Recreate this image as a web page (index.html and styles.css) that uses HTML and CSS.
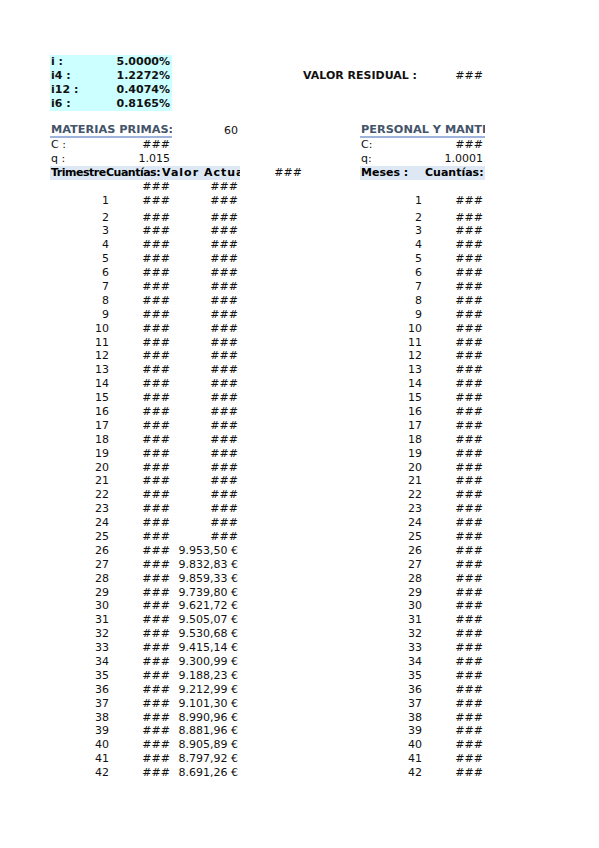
FILE: index.html
```html
<!DOCTYPE html>
<html lang="es">
<head>
<meta charset="utf-8">
<title>Materias primas</title>
<link rel="stylesheet" href="styles.css">
</head>
<body>
<div class="sheet">
  <div class="row"><span class="c rate lab">i :</span><span class="c rate val">5.0000%</span></div>
  <div class="row"><span class="c rate lab">i4 :</span><span class="c rate val">1.2272%</span><span></span><span></span><span class="c b">VALOR RESIDUAL :</span><span></span><span class="c r">###</span></div>
  <div class="row"><span class="c rate lab">i12 :</span><span class="c rate val">0.4074%</span></div>
  <div class="row"><span class="c rate lab">i6 :</span><span class="c rate val">0.8165%</span></div>
  <div class="row"></div>
  <div class="row"><span class="c title span2">MATERIAS PRIMAS:</span><span class="c r">60</span><span></span><span></span><span class="c title span2">PERSONAL Y MANTENIMIENTO</span></div>
  <div class="row"><span class="c">C :</span><span class="c r">###</span><span></span><span></span><span></span><span class="c">C:</span><span class="c r">###</span></div>
  <div class="row"><span class="c">q :</span><span class="c r">1.015</span><span></span><span></span><span></span><span class="c">q:</span><span class="c r">1.0001</span></div>
  <div class="row"><span class="c hd hl">Trimestre</span><span class="c hd hl h2">Cuantías:</span><span class="c hd h3">Valor Actual:</span><span class="c r edge">###</span><span></span><span class="c hd">Meses :</span><span class="c hd r">Cuantías:</span></div>
  <div class="row"><span></span><span class="c r">###</span><span class="c r">###</span></div>
  <div class="row tall"><span class="c n">1</span><span class="c r">###</span><span class="c r">###</span><span></span><span></span><span class="c n">1</span><span class="c r">###</span></div>
  <div class="row"><span class="c n">2</span><span class="c r">###</span><span class="c r">###</span><span></span><span></span><span class="c n">2</span><span class="c r">###</span></div>
  <div class="row"><span class="c n">3</span><span class="c r">###</span><span class="c r">###</span><span></span><span></span><span class="c n">3</span><span class="c r">###</span></div>
  <div class="row"><span class="c n">4</span><span class="c r">###</span><span class="c r">###</span><span></span><span></span><span class="c n">4</span><span class="c r">###</span></div>
  <div class="row"><span class="c n">5</span><span class="c r">###</span><span class="c r">###</span><span></span><span></span><span class="c n">5</span><span class="c r">###</span></div>
  <div class="row"><span class="c n">6</span><span class="c r">###</span><span class="c r">###</span><span></span><span></span><span class="c n">6</span><span class="c r">###</span></div>
  <div class="row"><span class="c n">7</span><span class="c r">###</span><span class="c r">###</span><span></span><span></span><span class="c n">7</span><span class="c r">###</span></div>
  <div class="row"><span class="c n">8</span><span class="c r">###</span><span class="c r">###</span><span></span><span></span><span class="c n">8</span><span class="c r">###</span></div>
  <div class="row"><span class="c n">9</span><span class="c r">###</span><span class="c r">###</span><span></span><span></span><span class="c n">9</span><span class="c r">###</span></div>
  <div class="row"><span class="c n">10</span><span class="c r">###</span><span class="c r">###</span><span></span><span></span><span class="c n">10</span><span class="c r">###</span></div>
  <div class="row"><span class="c n">11</span><span class="c r">###</span><span class="c r">###</span><span></span><span></span><span class="c n">11</span><span class="c r">###</span></div>
  <div class="row"><span class="c n">12</span><span class="c r">###</span><span class="c r">###</span><span></span><span></span><span class="c n">12</span><span class="c r">###</span></div>
  <div class="row"><span class="c n">13</span><span class="c r">###</span><span class="c r">###</span><span></span><span></span><span class="c n">13</span><span class="c r">###</span></div>
  <div class="row"><span class="c n">14</span><span class="c r">###</span><span class="c r">###</span><span></span><span></span><span class="c n">14</span><span class="c r">###</span></div>
  <div class="row"><span class="c n">15</span><span class="c r">###</span><span class="c r">###</span><span></span><span></span><span class="c n">15</span><span class="c r">###</span></div>
  <div class="row"><span class="c n">16</span><span class="c r">###</span><span class="c r">###</span><span></span><span></span><span class="c n">16</span><span class="c r">###</span></div>
  <div class="row"><span class="c n">17</span><span class="c r">###</span><span class="c r">###</span><span></span><span></span><span class="c n">17</span><span class="c r">###</span></div>
  <div class="row"><span class="c n">18</span><span class="c r">###</span><span class="c r">###</span><span></span><span></span><span class="c n">18</span><span class="c r">###</span></div>
  <div class="row"><span class="c n">19</span><span class="c r">###</span><span class="c r">###</span><span></span><span></span><span class="c n">19</span><span class="c r">###</span></div>
  <div class="row"><span class="c n">20</span><span class="c r">###</span><span class="c r">###</span><span></span><span></span><span class="c n">20</span><span class="c r">###</span></div>
  <div class="row"><span class="c n">21</span><span class="c r">###</span><span class="c r">###</span><span></span><span></span><span class="c n">21</span><span class="c r">###</span></div>
  <div class="row"><span class="c n">22</span><span class="c r">###</span><span class="c r">###</span><span></span><span></span><span class="c n">22</span><span class="c r">###</span></div>
  <div class="row"><span class="c n">23</span><span class="c r">###</span><span class="c r">###</span><span></span><span></span><span class="c n">23</span><span class="c r">###</span></div>
  <div class="row"><span class="c n">24</span><span class="c r">###</span><span class="c r">###</span><span></span><span></span><span class="c n">24</span><span class="c r">###</span></div>
  <div class="row"><span class="c n">25</span><span class="c r">###</span><span class="c r">###</span><span></span><span></span><span class="c n">25</span><span class="c r">###</span></div>
  <div class="row"><span class="c n">26</span><span class="c r">###</span><span class="c r">9.953,50 €</span><span></span><span></span><span class="c n">26</span><span class="c r">###</span></div>
  <div class="row"><span class="c n">27</span><span class="c r">###</span><span class="c r">9.832,83 €</span><span></span><span></span><span class="c n">27</span><span class="c r">###</span></div>
  <div class="row"><span class="c n">28</span><span class="c r">###</span><span class="c r">9.859,33 €</span><span></span><span></span><span class="c n">28</span><span class="c r">###</span></div>
  <div class="row"><span class="c n">29</span><span class="c r">###</span><span class="c r">9.739,80 €</span><span></span><span></span><span class="c n">29</span><span class="c r">###</span></div>
  <div class="row"><span class="c n">30</span><span class="c r">###</span><span class="c r">9.621,72 €</span><span></span><span></span><span class="c n">30</span><span class="c r">###</span></div>
  <div class="row"><span class="c n">31</span><span class="c r">###</span><span class="c r">9.505,07 €</span><span></span><span></span><span class="c n">31</span><span class="c r">###</span></div>
  <div class="row"><span class="c n">32</span><span class="c r">###</span><span class="c r">9.530,68 €</span><span></span><span></span><span class="c n">32</span><span class="c r">###</span></div>
  <div class="row"><span class="c n">33</span><span class="c r">###</span><span class="c r">9.415,14 €</span><span></span><span></span><span class="c n">33</span><span class="c r">###</span></div>
  <div class="row"><span class="c n">34</span><span class="c r">###</span><span class="c r">9.300,99 €</span><span></span><span></span><span class="c n">34</span><span class="c r">###</span></div>
  <div class="row"><span class="c n">35</span><span class="c r">###</span><span class="c r">9.188,23 €</span><span></span><span></span><span class="c n">35</span><span class="c r">###</span></div>
  <div class="row"><span class="c n">36</span><span class="c r">###</span><span class="c r">9.212,99 €</span><span></span><span></span><span class="c n">36</span><span class="c r">###</span></div>
  <div class="row"><span class="c n">37</span><span class="c r">###</span><span class="c r">9.101,30 €</span><span></span><span></span><span class="c n">37</span><span class="c r">###</span></div>
  <div class="row"><span class="c n">38</span><span class="c r">###</span><span class="c r">8.990,96 €</span><span></span><span></span><span class="c n">38</span><span class="c r">###</span></div>
  <div class="row"><span class="c n">39</span><span class="c r">###</span><span class="c r">8.881,96 €</span><span></span><span></span><span class="c n">39</span><span class="c r">###</span></div>
  <div class="row"><span class="c n">40</span><span class="c r">###</span><span class="c r">8.905,89 €</span><span></span><span></span><span class="c n">40</span><span class="c r">###</span></div>
  <div class="row"><span class="c n">41</span><span class="c r">###</span><span class="c r">8.797,92 €</span><span></span><span></span><span class="c n">41</span><span class="c r">###</span></div>
  <div class="row"><span class="c n">42</span><span class="c r">###</span><span class="c r">8.691,26 €</span><span></span><span></span><span class="c n">42</span><span class="c r">###</span></div>
</div>
</body>
</html>
```
FILE: styles.css
```css
html, body {
  margin: 0;
  padding: 0;
  background: #ffffff;
}

body {
  font-family: "DejaVu Sans", "Liberation Sans", sans-serif;
  font-size: 11px;
  color: #111111;
}

.sheet {
  width: 435px;
  margin-left: 50px;
  padding-top: 55px;
  overflow: hidden;
}

.row {
  display: grid;
  grid-template-columns: 61px 61px 68px 62px 58px 64px 61px;
  height: 13.9px;
  align-items: end;
}

.row.tall {
  height: 16.6px;
  align-items: start;
}

.c {
  display: block;
  white-space: nowrap;
  line-height: 13.9px;
  padding: 0 1px;
}

.r {
  text-align: right;
  padding-right: 2px;
}

.r.edge {
  padding-right: 0;
}

.n {
  text-align: right;
  padding-right: 2px;
}

.b {
  font-weight: bold;
}

.rate {
  background: #ccffff;
  font-weight: bold;
  height: 13.9px;
}

.rate.val {
  text-align: right;
  padding-right: 2px;
}

.title {
  grid-column: span 2;
  font-size: 11.3px;
  font-weight: bold;
  color: #44546a;
  border-bottom: 2px solid #9fb4dc;
  line-height: 12px;
  overflow: hidden;
}

.hd {
  font-weight: bold;
  color: #000000;
  background: #dde8f4;
  overflow: hidden;
}

.hl {
  letter-spacing: -0.5px;
}

.h2 {
  margin-left: -5px;
  padding-left: 0;
}

.h3 {
  margin-left: -10px;
  padding-left: 0;
  letter-spacing: 1px;
}
```
